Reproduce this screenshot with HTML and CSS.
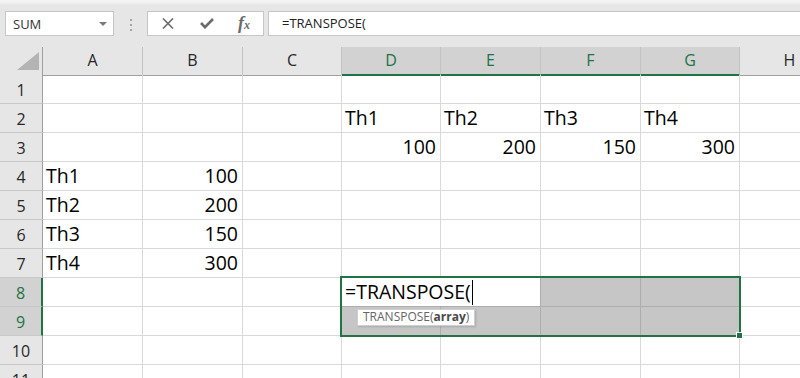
FILE: index.html
```html
<!DOCTYPE html>
<html>
<head>
    <title>TRANSPOSE</title>
    <link rel="stylesheet" href="styles.css">
</head>
<body>
    <div class="formula-bar">
        <div class="name-box">
            <span>SUM</span>
            <span class="caret"></span>
        </div>
        <div class="grip"><i></i><i></i><i></i></div>
        <div class="fx-box">
            <svg class="icon-cancel" width="12" height="11" viewBox="0 0 12 11">
                <path d="M1 0.5 L11 10.5 M11 0.5 L1 10.5" />
            </svg>
            <svg class="icon-enter" width="14" height="11" viewBox="0 0 14 11">
                <polyline points="1,5 5,9.2 13,1" />
            </svg>
            <span class="fx">f<small>x</small></span>
        </div>
        <div class="formula-input">=TRANSPOSE(</div>
    </div>

    <div class="sheet">
        <div class="row head">
            <div class="corner">
                <svg width="22" height="18" viewBox="0 0 22 18"><polygon points="22,0 22,18 0,18" /></svg>
            </div>
            <div class="col-head">A</div>
            <div class="col-head">B</div>
            <div class="col-head">C</div>
            <div class="col-head active">D</div>
            <div class="col-head active">E</div>
            <div class="col-head active">F</div>
            <div class="col-head active">G</div>
            <div class="col-head">H</div>
        </div>

        <div class="row">
            <div class="row-head">1</div>
            <div class="cell"></div><div class="cell"></div><div class="cell"></div><div class="cell"></div>
            <div class="cell"></div><div class="cell"></div><div class="cell"></div><div class="cell"></div>
        </div>
        <div class="row">
            <div class="row-head">2</div>
            <div class="cell"></div><div class="cell"></div><div class="cell"></div>
            <div class="cell">Th1</div><div class="cell">Th2</div><div class="cell">Th3</div><div class="cell">Th4</div>
            <div class="cell"></div>
        </div>
        <div class="row">
            <div class="row-head">3</div>
            <div class="cell"></div><div class="cell"></div><div class="cell"></div>
            <div class="cell num">100</div><div class="cell num">200</div><div class="cell num">150</div><div class="cell num">300</div>
            <div class="cell"></div>
        </div>
        <div class="row">
            <div class="row-head">4</div>
            <div class="cell">Th1</div><div class="cell num">100</div>
            <div class="cell"></div><div class="cell"></div><div class="cell"></div><div class="cell"></div><div class="cell"></div><div class="cell"></div>
        </div>
        <div class="row">
            <div class="row-head">5</div>
            <div class="cell">Th2</div><div class="cell num">200</div>
            <div class="cell"></div><div class="cell"></div><div class="cell"></div><div class="cell"></div><div class="cell"></div><div class="cell"></div>
        </div>
        <div class="row">
            <div class="row-head">6</div>
            <div class="cell">Th3</div><div class="cell num">150</div>
            <div class="cell"></div><div class="cell"></div><div class="cell"></div><div class="cell"></div><div class="cell"></div><div class="cell"></div>
        </div>
        <div class="row">
            <div class="row-head">7</div>
            <div class="cell">Th4</div><div class="cell num">300</div>
            <div class="cell"></div><div class="cell"></div><div class="cell"></div><div class="cell"></div><div class="cell"></div><div class="cell"></div>
        </div>
        <div class="row">
            <div class="row-head active">8</div>
            <div class="cell"></div><div class="cell"></div><div class="cell"></div>
            <div class="cell edit first"><span class="edit-text">=TRANSPOSE(<span class="cursor"></span></span></div>
            <div class="cell edit"></div>
            <div class="cell hl"></div><div class="cell hl"></div>
            <div class="cell"></div>
        </div>
        <div class="row">
            <div class="row-head active">9</div>
            <div class="cell"></div><div class="cell"></div><div class="cell"></div>
            <div class="cell hl"></div><div class="cell hl"></div><div class="cell hl"></div><div class="cell hl"></div>
            <div class="cell"></div>
        </div>
        <div class="row">
            <div class="row-head">10</div>
            <div class="cell"></div><div class="cell"></div><div class="cell"></div><div class="cell"></div>
            <div class="cell"></div><div class="cell"></div><div class="cell"></div><div class="cell"></div>
        </div>
        <div class="row">
            <div class="row-head">11</div>
            <div class="cell"></div><div class="cell"></div><div class="cell"></div><div class="cell"></div>
            <div class="cell"></div><div class="cell"></div><div class="cell"></div><div class="cell"></div>
        </div>

        <!-- D8:G9 selection and the function hint drawn over the grid -->
        <div class="selection"><span class="fill-handle"></span></div>
        <div class="tip">TRANSPOSE(<b>array</b>)</div>
    </div>
</body>
</html>
```

FILE: styles.css
```css
html, body {
    height: 100%;
    overflow: hidden;
}

body {
    margin: 0;
    background-color: #fff;
    font-family: "Open Sans", Arial, sans-serif;
    color: #000;
}

/* formula bar */

.formula-bar {
    display: flex;
    align-items: flex-start;
    height: 47px;
    box-sizing: border-box;
    padding: 11px 0 0 5px;
    background: linear-gradient(#f4f4f4, #f4f4f4 2px, #e6e6e6 5px);
}

.name-box {
    width: 109px;
    height: 25px;
    box-sizing: border-box;
    display: flex;
    align-items: center;
    justify-content: space-between;
    padding: 0 6px 0 7px;
    border: 1px solid #c6c6c6;
    background-color: #fff;
    font-size: 13px;
    color: #333;
}

.caret {
    width: 0;
    height: 0;
    border-left: 4px solid transparent;
    border-right: 4px solid transparent;
    border-top: 4px solid #7a7a7a;
}

.grip {
    margin: 8px 0 0 16px;
    width: 2px;
}

.grip i {
    display: block;
    width: 2px;
    height: 2px;
    margin-bottom: 3px;
    background-color: #a6a6a6;
}

.fx-box {
    margin-left: 15px;
    width: 117px;
    height: 25px;
    box-sizing: border-box;
    display: flex;
    align-items: center;
    padding-left: 14px;
    border: 1px solid #c6c6c6;
    background-color: #fff;
}

.icon-cancel path {
    stroke: #6b6b6b;
    stroke-width: 1.6;
    fill: none;
}

.icon-enter {
    margin-left: 26px;
}

.icon-enter polyline {
    stroke: #6b6b6b;
    stroke-width: 2.6;
    fill: none;
}

.fx {
    margin-left: 24px;
    font-family: "Liberation Serif", "DejaVu Serif", serif;
    font-style: italic;
    font-weight: bold;
    font-size: 18px;
    color: #6b6b6b;
    line-height: 18px;
}

.fx small {
    font-size: 12px;
}

.formula-input {
    flex: 1;
    margin-left: 4px;
    height: 25px;
    box-sizing: border-box;
    padding-left: 13px;
    border: 1px solid #c6c6c6;
    border-right: none;
    background-color: #fff;
    font-size: 13px;
    line-height: 23px;
    color: #222;
}

/* grid */

.sheet {
    position: relative;
}

.row {
    display: grid;
    grid-template-columns: 43px 100px 100px 99px 99px 100px 100px 99px 100px;
    height: 29px;
}

.row.head {
    height: 28px;
}

.corner {
    box-sizing: border-box;
    padding: 5px 0 0 17px;
    background-color: #e6e6e6;
    border-right: 1px solid #9f9f9f;
    border-bottom: 1px solid #9f9f9f;
}

.corner svg {
    display: block;
    fill: #b4b4b4;
}

.col-head {
    box-sizing: border-box;
    background-color: #e6e6e6;
    border-right: 1px solid #c3c3c3;
    border-bottom: 1px solid #9f9f9f;
    text-align: center;
    font-size: 16px;
    line-height: 27px;
    color: #262626;
}

.col-head.active {
    background-color: #d2d2d2;
    color: #217346;
    border-bottom: 2px solid #217346;
}

.row-head {
    box-sizing: border-box;
    padding-top: 2px;
    background-color: #e6e6e6;
    border-right: 1px solid #9f9f9f;
    border-bottom: 1px solid #c8c8c8;
    text-align: center;
    font-size: 16px;
    line-height: 26px;
    color: #262626;
}

.row-head.active {
    background-color: #d2d2d2;
    color: #217346;
    border-right: 2px solid #217346;
}

.cell {
    box-sizing: border-box;
    padding: 0 4px 0 3px;
    border-right: 1px solid #d9d9d9;
    border-bottom: 1px solid #d9d9d9;
    font-size: 19.5px;
    line-height: 28px;
    white-space: nowrap;
}

.cell.num {
    text-align: right;
}

.cell.hl {
    background-color: #c6c6c6;
    border-color: #adadad;
}

.cell.edit {
    border-bottom-color: #adadad;
    border-right-color: #adadad;
}

.cell.edit.first {
    border-right: none;
}

.edit-text {
    position: relative;
    z-index: 1;
}

.cursor {
    display: inline-block;
    width: 1px;
    height: 25px;
    margin-left: 1px;
    vertical-align: -6px;
    background-color: #000;
}

.selection {
    position: absolute;
    left: 340px;
    top: 229px;
    width: 401px;
    height: 61px;
    box-sizing: border-box;
    border: 2px solid #217346;
}

.fill-handle {
    position: absolute;
    right: -4px;
    bottom: -4px;
    width: 5px;
    height: 5px;
    background-color: #217346;
    border: 1px solid #fff;
}

.tip {
    position: absolute;
    left: 357px;
    top: 262px;
    height: 17px;
    box-sizing: border-box;
    padding: 0 5px;
    border: 1px solid #cfcfcf;
    background-color: #fff;
    box-shadow: 1px 1px 2px rgba(0, 0, 0, 0.15);
    font-size: 12px;
    line-height: 14px;
    color: #666;
    white-space: nowrap;
}

.tip b {
    color: #4a4a4a;
}
```
